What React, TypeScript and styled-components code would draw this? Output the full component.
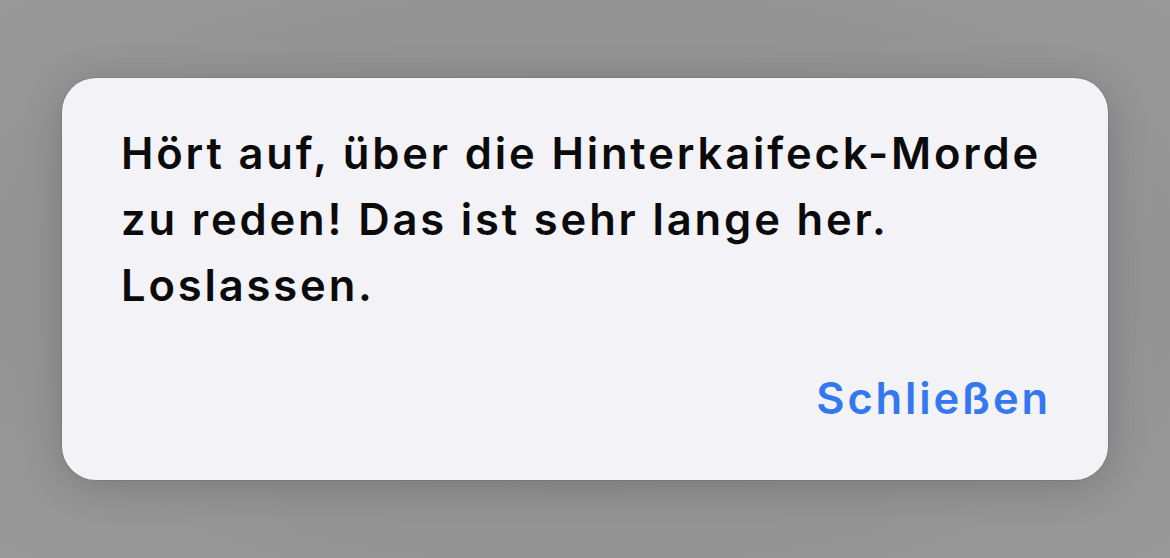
import React from "react";
import styled, { createGlobalStyle } from "styled-components";

const Global = createGlobalStyle`
  html, body { margin: 0; padding: 0; }
  body {
    background: #959595;
    font-family: Inter, "Noto Sans", "Liberation Sans", sans-serif;
  }
`;

const Screen = styled.div`
  width: 1170px;
  height: 558px;
  display: flex;
  align-items: center;
  justify-content: center;
  background: radial-gradient(ellipse at center, #8a8a8a 0%, #939393 60%, #989898 100%);
`;

const Dialog = styled.div`
  box-sizing: border-box;
  width: 1046px;
  height: 402px;
  background: #f2f2f7;
  border-radius: 34px;
  box-shadow: 0 0 0 1px rgba(0, 0, 0, 0.08), 0 6px 40px rgba(0, 0, 0, 0.18);
  padding: 42px 60px 0 59px;
  display: flex;
  flex-direction: column;
`;

const Message = styled.p`
  margin: 0;
  font-size: 43.5px;
  line-height: 66px;
  font-weight: 600;
  color: #0b0b0c;
  letter-spacing: 2.85px;
`;

const Actions = styled.div`
  display: flex;
  justify-content: flex-end;
  margin-top: 56px;
`;

const ActionButton = styled.button`
  border: none;
  background: none;
  padding: 0;
  margin-right: -3px;
  font-family: inherit;
  font-size: 43.5px;
  line-height: 48px;
  font-weight: 600;
  letter-spacing: 2.85px;
  color: #3478f0;
  cursor: pointer;
`;

export default function App() {
  return (
    <>
      <Global />
      <Screen>
        <Dialog>
          <Message>
            Hört auf, über die Hinterkaifeck-Morde
            <br />
            zu reden! Das ist sehr lange her.
            <br />
            Loslassen.
          </Message>
          <Actions>
            <ActionButton>Schließen</ActionButton>
          </Actions>
        </Dialog>
      </Screen>
    </>
  );
}
